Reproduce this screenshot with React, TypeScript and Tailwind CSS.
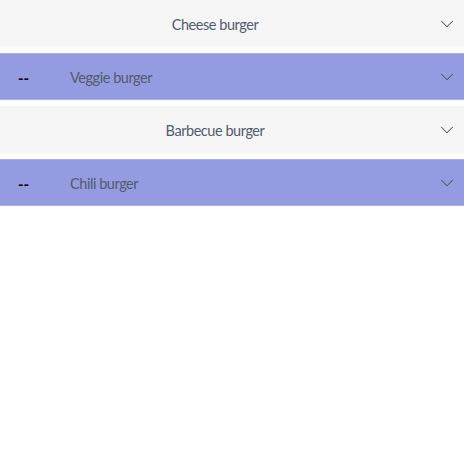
import { ChevronDown } from "lucide-react";

type Item = { title: string; marked: boolean };

const ITEMS: Item[] = [
  { title: "Cheese burger", marked: false },
  { title: "Veggie burger", marked: true },
  { title: "Barbecue burger", marked: false },
  { title: "Chili burger", marked: true },
];

function Row({ item }: { item: Item }) {
  return (
    <div
      className={
        item.marked
          ? "flex h-[47px] items-center bg-[#959be0] border-y border-[#aab0ea]"
          : "flex h-[47px] items-center bg-[#f5f5f5]"
      }
    >
      {item.marked ? (
        <div className="flex flex-1 items-center pt-[3px]">
          <span className="w-[70px] pl-[18px] text-[15px] font-bold text-black">--</span>
          <span className="text-[14.5px] tracking-[-0.45px] text-[#525c6e]">{item.title}</span>
        </div>
      ) : (
        <div className="flex-1 pt-[3px] text-center text-[14.5px] tracking-[-0.45px] text-[#525c6e]">
          {item.title}
        </div>
      )}
      <div className="flex w-[34px] justify-center">
        <ChevronDown className="h-[22px] w-[22px] text-[#555]" strokeWidth={1.1} />
      </div>
    </div>
  );
}

export default function App() {
  return (
    <div className="flex flex-col gap-[6px] bg-white font-['Lato',sans-serif]">
      {ITEMS.map((item) => (
        <Row key={item.title} item={item} />
      ))}
    </div>
  );
}
